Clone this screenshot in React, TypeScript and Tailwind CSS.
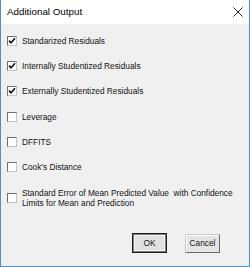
import { useState } from 'react';

const options = [
  { id: 'std', label: 'Standarized Residuals', checked: true },
  { id: 'int', label: 'Internally Studentized Residuals', checked: true },
  { id: 'ext', label: 'Externally Studentized Residuals', checked: true },
  { id: 'lev', label: 'Leverage', checked: false },
  { id: 'dff', label: 'DFFITS', checked: false },
  { id: 'cook', label: "Cook's Distance", checked: false },
];

function Box({ checked, onToggle }: { checked: boolean; onToggle: () => void }) {
  return (
    <button
      type="button"
      onClick={onToggle}
      className="w-[10px] h-[10px] shrink-0 bg-white border border-t-[#6f6f6f] border-l-[#6f6f6f] border-r-[#c4c4c4] border-b-[#c4c4c4] flex items-center justify-center p-0"
    >
      {checked && (
        <svg width="8" height="8" viewBox="0 0 8 8">
          <path d="M1 3.6 L3 5.8 L7 1.2" fill="none" stroke="#111" strokeWidth="1.6" />
        </svg>
      )}
    </button>
  );
}

export default function App() {
  const [state, setState] = useState<Record<string, boolean>>(() => {
    const s: Record<string, boolean> = { sem: false };
    options.forEach(o => (s[o.id] = o.checked));
    return s;
  });

  const toggle = (id: string) => setState(prev => ({ ...prev, [id]: !prev[id] }));

  return (
    <div
      className="w-[250px] h-[267px] flex flex-col bg-[#f0f0f0] border-x border-b border-[#4a8fcf] text-[#111] text-[8.3px] leading-[10px]"
      style={{ fontFamily: '"Liberation Sans", Arial, sans-serif' }}
    >
      {/* Title bar */}
      <div className="h-[24px] shrink-0 bg-white flex items-center justify-between pl-[6px] pr-[6px]">
        <span className="text-[9.8px] text-black">Additional Output</span>
        <svg width="10" height="10" viewBox="0 0 10 10" className="mr-[0px]">
          <path d="M0.5 0.5 L9.5 9.5 M9.5 0.5 L0.5 9.5" stroke="#222" strokeWidth="1" />
        </svg>
      </div>

      {/* Options */}
      <div className="flex flex-col pt-[4px] pl-[6px]">
        {options.map(o => (
          <div key={o.id} className="h-[25.3px] flex items-center gap-[5px]">
            <Box checked={state[o.id]} onToggle={() => toggle(o.id)} />
            <span>{o.label}</span>
          </div>
        ))}
        <div className="flex items-center gap-[5px] mt-[8px]">
          <Box checked={state.sem} onToggle={() => toggle('sem')} />
          <span className="whitespace-pre">
            {'Standard Error of Mean Predicted Value  with Confidence\nLimits for Mean and Prediction'}
          </span>
        </div>
      </div>

      {/* Buttons */}
      <div className="flex justify-end gap-[18px] pr-[29px] mt-[25px]">
        <button
          type="button"
          className="w-[35px] h-[20px] border border-[#1e1e1e] bg-[#e1e1e1] shadow-[inset_0_0_0_1px_#7d7d7d,inset_0_0_0_2px_#f4f4f4] text-[8.3px]"
        >
          OK
        </button>
        <button
          type="button"
          className="w-[35px] h-[19px] mt-[1px] border border-t-[#c8c8c8] border-l-[#c8c8c8] border-r-[#6a6a6a] border-b-[#6a6a6a] bg-[#e4e4e4] shadow-[inset_1px_1px_0_#ffffff] text-[8.3px]"
        >
          Cancel
        </button>
      </div>
    </div>
  );
}
